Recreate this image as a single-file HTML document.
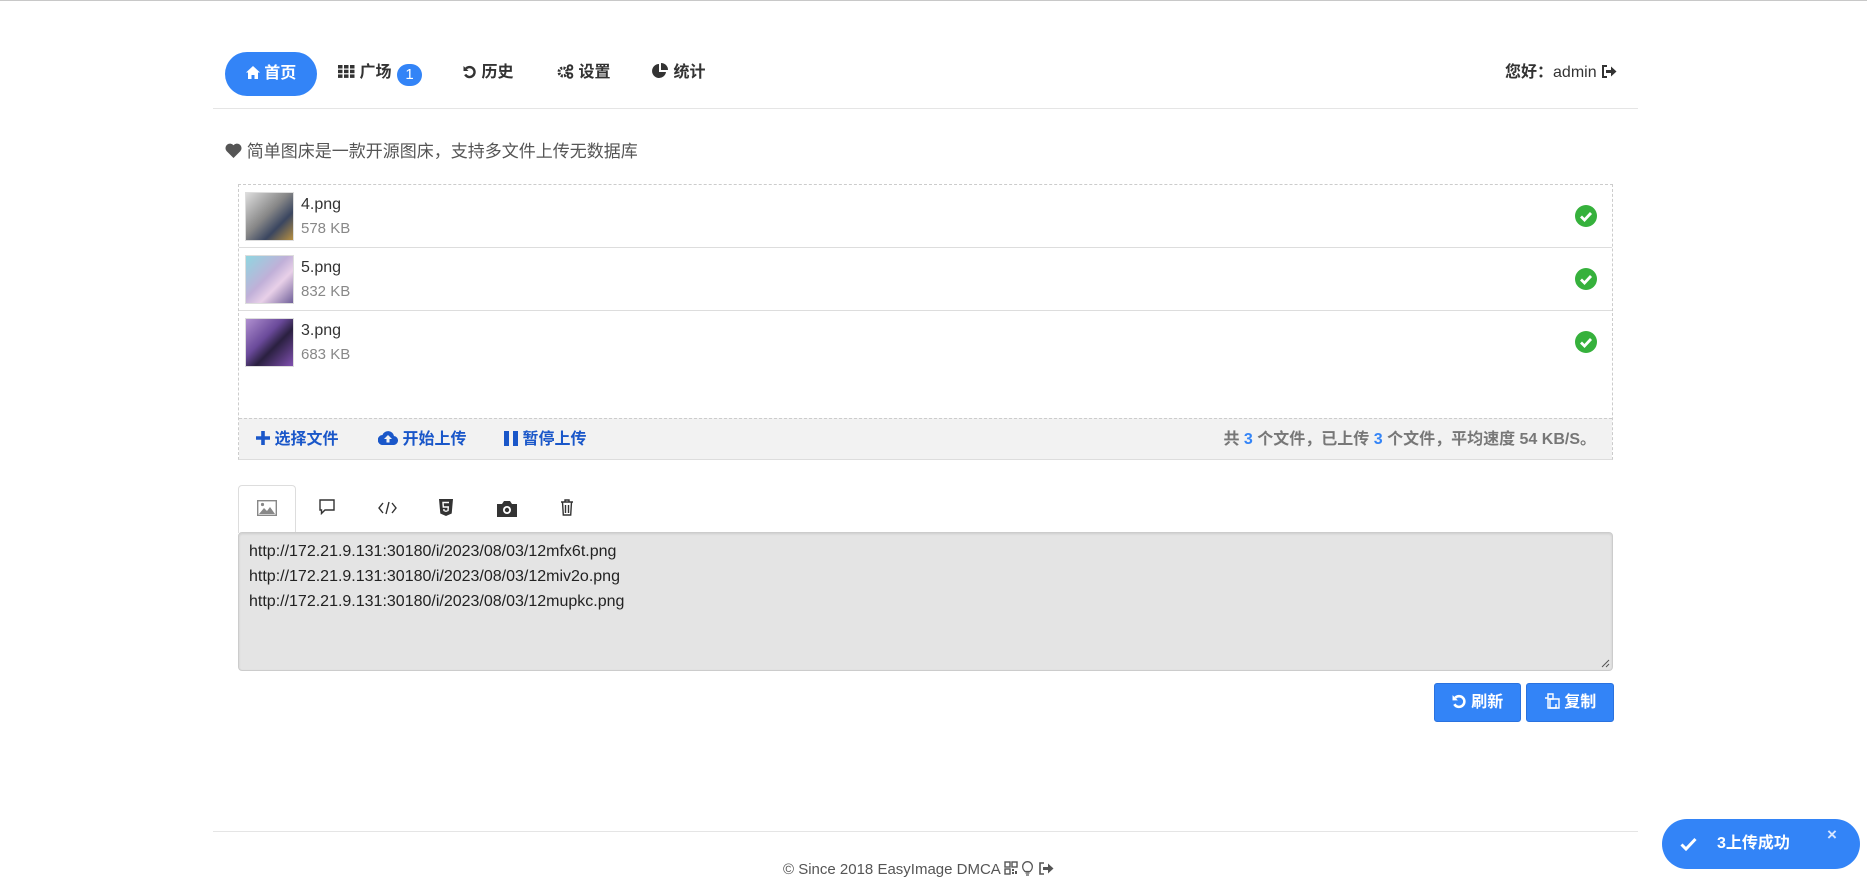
<!DOCTYPE html>
<html><head><meta charset="utf-8"><style>
*{box-sizing:border-box;margin:0;padding:0}
body{width:1867px;height:890px;overflow:hidden;background:#fff;font-family:"Liberation Sans","Noto Sans CJK SC",sans-serif;color:#333;position:relative;border-top:1px solid #c8c8c8}
.a{position:absolute}
.nav{font-size:16px;font-weight:bold;color:#333;top:62px;line-height:20px}
.row{position:absolute;left:239px;width:1373px;height:63px;border-bottom:1px solid #ddd}
.thumb{position:absolute;left:6px;top:7px;width:49px;height:49px;border:1px solid #ddd}
.fn{position:absolute;left:62px;top:11px;font-size:16px;color:#333}
.fs{position:absolute;left:62px;top:35px;font-size:15px;color:#888}
.chk{position:absolute;right:15px;top:20px;width:22px;height:22px;border-radius:50%;background:#36b13c}
.tb{font-size:16px;font-weight:bold;color:#1a57c9;top:424px}
.btn{position:absolute;top:682px;height:39px;background:#3384f7;border:1px solid #2a72df;border-radius:3px;color:#fff;font-weight:bold;font-size:16px;line-height:37px;text-align:center}
</style></head><body>
<div class="a" style="left:225px;top:51px;width:92px;height:44px;border-radius:22px;background:#3384f7;color:#fff;font-weight:bold;font-size:16px;line-height:44px;text-align:center">
<svg width="14" height="13" viewBox="0 0 14 13" style="vertical-align:-1px"><path d="M7 0L0 6.5h2V13h3.5V9h3v4H12V6.5h2z" fill="#fff"/></svg> 首页</div>
<div class="a nav" style="left:338px"><svg width="17" height="13" viewBox="0 0 17 13" style="vertical-align:-1px"><g fill="#333"><rect x="0" y="0" width="4.5" height="3.5"/><rect x="6" y="0" width="4.5" height="3.5"/><rect x="12" y="0" width="4.5" height="3.5"/><rect x="0" y="4.7" width="4.5" height="3.5"/><rect x="6" y="4.7" width="4.5" height="3.5"/><rect x="12" y="4.7" width="4.5" height="3.5"/><rect x="0" y="9.4" width="4.5" height="3.5"/><rect x="6" y="9.4" width="4.5" height="3.5"/><rect x="12" y="9.4" width="4.5" height="3.5"/></g></svg> 广场</div>
<div class="a" style="left:397px;top:63px;width:25px;height:22px;border-radius:11px;background:#3384f7;color:#fff;font-size:15px;line-height:22px;text-align:center">1</div>
<div class="a nav" style="left:463px"><svg width="14" height="14" viewBox="0 0 14 14" style="vertical-align:-2px"><path d="M3 3.5A5 5 0 1 1 2.2 9.5" fill="none" stroke="#333" stroke-width="2.4"/><path d="M0.5 1v5h5z" fill="#333"/></svg> 历史</div>
<div class="a nav" style="left:557px"><svg width="17" height="15" viewBox="0 0 17 15" style="vertical-align:-2px"><circle cx="6" cy="8" r="4" fill="none" stroke="#333" stroke-width="3" stroke-dasharray="2 1.2"/><circle cx="13" cy="3.5" r="2.3" fill="none" stroke="#333" stroke-width="2"/><circle cx="13" cy="11.5" r="2.3" fill="none" stroke="#333" stroke-width="2"/></svg> 设置</div>
<div class="a nav" style="left:652px"><svg width="17" height="16" viewBox="0 0 17 16" style="vertical-align:-2px"><path d="M7 1A7 7 0 1 0 14 9H7z" fill="#333"/><path d="M9 0v7h7A7 7 0 0 0 9 0z" fill="#333"/></svg> 统计</div>
<div class="a" style="left:1505px;top:62px;font-size:16px;line-height:20px"><b>您好：</b>admin <svg width="16" height="13" viewBox="0 0 16 13" style="vertical-align:-1px"><path d="M6 1H2v11h4" fill="none" stroke="#333" stroke-width="2"/><path d="M5 5h5V1.5l5.5 5-5.5 5V8H5z" fill="#333"/></svg></div>
<div class="a" style="left:213px;top:107px;width:1425px;height:1px;background:#e5e5e5"></div>
<div class="a" style="left:225px;top:140px;font-size:17px;color:#555;line-height:22px"><svg width="17" height="15" viewBox="0 0 17 15" style="vertical-align:-1px"><path d="M8.5 15L1.5 8A4.3 4.3 0 0 1 8.5 2.3 4.3 4.3 0 0 1 15.5 8z" fill="#555"/></svg> 简单图床是一款开源图床，支持多文件上传无数据库</div>
<div class="a" style="left:238px;top:183px;width:1375px;height:276px;border:1px dashed #ccc;border-bottom:1px solid #ddd"></div>
<div class="row" style="top:184px"><div class="thumb" style="background:linear-gradient(135deg,#ddd,#888 45%,#3a4660 70%,#b89040)"></div><div class="fn">4.png</div><div class="fs">578 KB</div><div class="chk"><svg width="22" height="22" viewBox="0 0 22 22"><path d="M6 11.5l3.5 3.5 6.5-7" fill="none" stroke="#fff" stroke-width="2.8"/></svg></div></div>
<div class="row" style="top:247px"><div class="thumb" style="background:linear-gradient(135deg,#8fd6e0,#c0b0d8 45%,#e8d0e8 65%,#70609a)"></div><div class="fn">5.png</div><div class="fs">832 KB</div><div class="chk"><svg width="22" height="22" viewBox="0 0 22 22"><path d="M6 11.5l3.5 3.5 6.5-7" fill="none" stroke="#fff" stroke-width="2.8"/></svg></div></div>
<div class="row" style="top:310px;border-bottom:none"><div class="thumb" style="background:linear-gradient(135deg,#b090d0,#6a4a9a 40%,#2a2040 60%,#8050b0)"></div><div class="fn">3.png</div><div class="fs">683 KB</div><div class="chk"><svg width="22" height="22" viewBox="0 0 22 22"><path d="M6 11.5l3.5 3.5 6.5-7" fill="none" stroke="#fff" stroke-width="2.8"/></svg></div></div>
<div class="a" style="left:239px;top:417px;width:1373px;height:41px;background:#f2f2f2;border-top:1px dashed #ccc"></div>
<div class="a tb" style="left:256px"><svg width="14" height="14" viewBox="0 0 14 14" style="vertical-align:-1px"><path d="M5.2 0h3.6v5.2H14v3.6H8.8V14H5.2V8.8H0V5.2h5.2z" fill="#1a57c9"/></svg> 选择文件</div>
<div class="a tb" style="left:378px"><svg width="20" height="14" viewBox="0 0 20 14" style="vertical-align:-1px"><path d="M5 14A5 5 0 0 1 4.5 4 6 6 0 0 1 16 5a4.5 4.5 0 0 1-1 9z" fill="#1a57c9"/><path d="M10 4l-4 4h2.5v3.5h3V8H14z" fill="#f2f2f2"/></svg> 开始上传</div>
<div class="a tb" style="left:504px"><svg width="14" height="15" viewBox="0 0 14 15" style="vertical-align:-2px"><rect x="0" y="0" width="5" height="15" fill="#1a57c9"/><rect x="9" y="0" width="5" height="15" fill="#1a57c9"/></svg> 暂停上传</div>
<div class="a" style="left:1222px;top:424px;width:374px;text-align:right;font-size:16px;font-weight:bold;color:#777;white-space:nowrap">共 <span style="color:#3384f7">3</span> 个文件，已上传 <span style="color:#3384f7">3</span> 个文件，平均速度 54 KB/S。</div>
<div class="a" style="left:238px;top:484px;width:58px;height:48px;border:1px solid #ddd;border-bottom:none;border-radius:4px 4px 0 0;background:#fff"></div>
<svg class="a" style="left:257px;top:499px" width="20" height="16" viewBox="0 0 20 16"><rect x="0.7" y="0.7" width="18.6" height="14.6" fill="none" stroke="#888" stroke-width="1.4"/><path d="M2 14l5-6 3 3 3-4 5 7z" fill="#888"/><circle cx="5.5" cy="4.5" r="1.6" fill="#888"/></svg>
<svg class="a" style="left:319px;top:498px" width="16" height="16" viewBox="0 0 16 16"><path d="M1 1h14v10H6l-3.5 3.5V11H1z" fill="none" stroke="#333" stroke-width="1.4"/></svg>
<svg class="a" style="left:378px;top:500px" width="19" height="14" viewBox="0 0 19 14"><path d="M5 2L1 7l4 5M14 2l4 5-4 5M11 1L8 13" fill="none" stroke="#333" stroke-width="1.4"/></svg>
<svg class="a" style="left:439px;top:498px" width="14" height="17" viewBox="0 0 14 17"><path d="M0 0h14l-1.3 14.5L7 17 1.3 14.5z" fill="#333"/><path d="M10 3.5H4l.3 4.5h5l-.3 3.5-2 .7-2-.7-.1-1.5" fill="none" stroke="#fff" stroke-width="1.4"/></svg>
<svg class="a" style="left:497px;top:499px" width="20" height="17" viewBox="0 0 20 17"><path d="M0 4h5l2-3h6l2 3h5v13H0z" fill="#333"/><circle cx="10" cy="10" r="4" fill="#fff"/><circle cx="10" cy="10" r="2.2" fill="#333"/></svg>
<svg class="a" style="left:560px;top:498px" width="14" height="17" viewBox="0 0 14 17"><path d="M1 3h12M5 3V1h4v2M2.5 3l.8 13h7.4l.8-13M5.5 6v8M8.5 6v8" fill="none" stroke="#333" stroke-width="1.4"/></svg>
<div class="a" style="left:238px;top:531px;width:1375px;height:139px;background:#e4e4e4;border:1px solid #ccc;border-radius:4px;box-shadow:inset 0 1px 2px rgba(0,0,0,.1);padding:6px 10px;font-size:16px;line-height:25px;color:#222">http://172.21.9.131:30180/i/2023/08/03/12mfx6t.png<br>http://172.21.9.131:30180/i/2023/08/03/12miv2o.png<br>http://172.21.9.131:30180/i/2023/08/03/12mupkc.png</div>
<svg class="a" style="left:1600px;top:657px" width="10" height="10" viewBox="0 0 10 10"><path d="M9 2L2 9M9 6L6 9" stroke="#555" stroke-width="1"/></svg>
<div class="btn" style="left:1434px;width:87px"><svg width="15" height="15" viewBox="0 0 14 14" style="vertical-align:-2px"><path d="M3 3.5A5 5 0 1 1 2.2 9.5" fill="none" stroke="#fff" stroke-width="2.4"/><path d="M0.5 1v5h5z" fill="#fff"/></svg> 刷新</div>
<div class="btn" style="left:1526px;width:88px"><svg width="16" height="16" viewBox="0 0 16 16" style="vertical-align:-2px"><path d="M4 1h5v5H4zM1 5h3v10h8v-4" fill="none" stroke="#fff" stroke-width="1.4"/><path d="M6 6h9v9H6z" fill="none" stroke="#fff" stroke-width="1.4"/></svg> 复制</div>
<div class="a" style="left:213px;top:830px;width:1425px;height:1px;background:#e5e5e5"></div>
<div class="a" style="left:783px;top:859px;font-size:15px;color:#555;line-height:20px;white-space:nowrap">© Since 2018 EasyImage DMCA <svg width="14" height="14" viewBox="0 0 14 14" style="vertical-align:-1px"><g fill="none" stroke="#555" stroke-width="1.4"><rect x="1" y="1" width="5" height="5"/><rect x="8" y="1" width="5" height="5"/><rect x="1" y="8" width="5" height="5"/></g><path d="M8 8h2v2H8zM11 10h2v3h-2zM8 11h2v2H8z" fill="#555"/></svg> <svg width="11" height="15" viewBox="0 0 11 15" style="vertical-align:-2px"><path d="M3 10.5C1 8.5.7 7.5.7 5.5a4.8 4.8 0 0 1 9.6 0c0 2-.3 3-2.3 5z" fill="none" stroke="#555" stroke-width="1.3"/><path d="M3.5 12h4M4 14h3" stroke="#555" stroke-width="1.3"/></svg> <svg width="16" height="13" viewBox="0 0 16 13" style="vertical-align:-1px"><path d="M6 1H2v11h4" fill="none" stroke="#555" stroke-width="1.6"/><path d="M5 5h5V1.5l5.5 5-5.5 5V8H5z" fill="#555"/></svg></div>
<div class="a" style="left:1662px;top:818px;width:198px;height:50px;border-radius:25px;background:#3384f7;color:#fff"><svg class="a" style="left:18px;top:18px" width="17" height="14" viewBox="0 0 17 14"><path d="M1.5 7.5l4.5 4.5L15.5 2" fill="none" stroke="#fff" stroke-width="3"/></svg><div class="a" style="left:55px;top:15px;font-size:16px;font-weight:bold;line-height:20px">3上传成功</div><div class="a" style="left:165px;top:6px;font-size:17px;color:#d8e6ff;font-weight:bold">×</div></div>
</body></html>
